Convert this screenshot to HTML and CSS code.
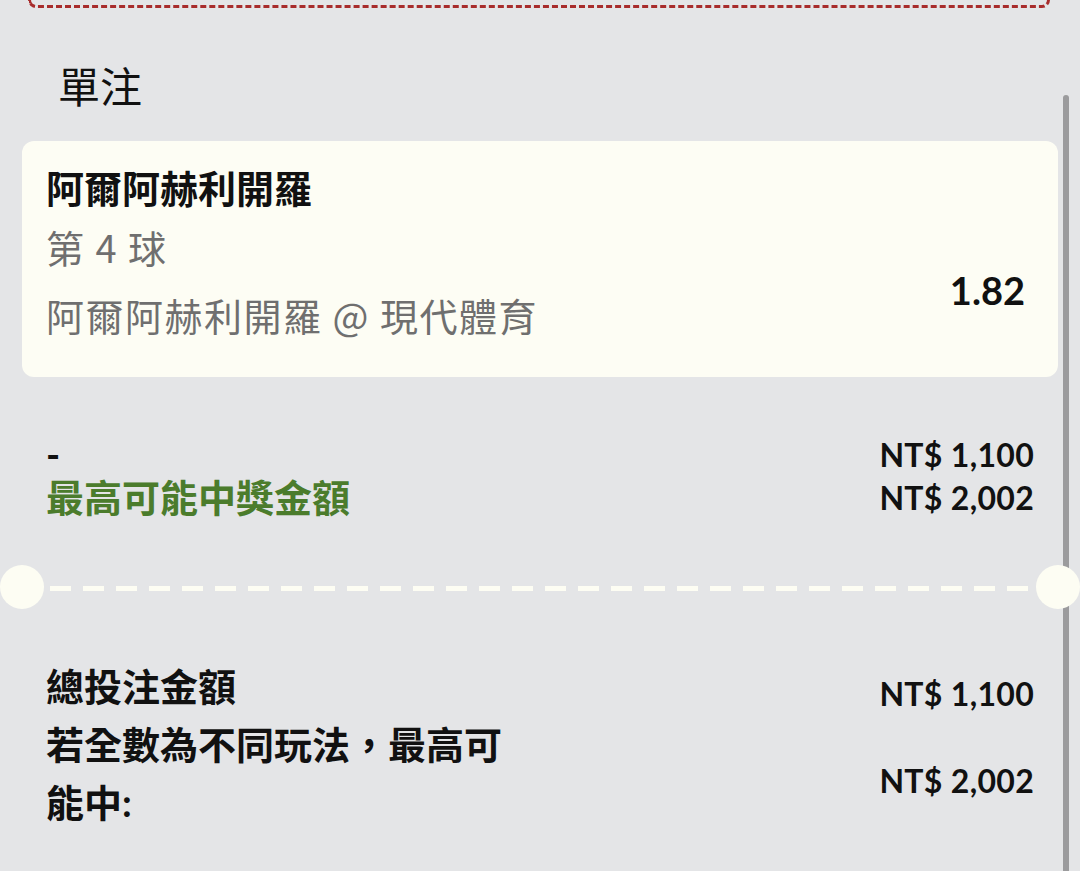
FILE: index.html
```html
<!DOCTYPE html>
<html lang="zh-Hant">
<head>
    <meta charset="UTF-8">
    <meta name="viewport" content="width=device-width, initial-scale=1.0">
    <title>投注單</title>
    <link rel="stylesheet" href="styles.css">
</head>
<body>

    <div class="prev-slip"></div>
    <div class="scroll-thumb"></div>

    <main class="betslip">
        <h2 class="section-title">單注</h2>

        <div class="bet-card">
            <div class="bet-info">
                <div class="bet-team">阿爾阿赫利開羅</div>
                <div class="bet-market">第 4 球</div>
                <div class="bet-event">阿爾阿赫利開羅 @ 現代體育</div>
            </div>
            <div class="bet-odds">1.82</div>
        </div>

        <div class="stake-row">
            <div class="stake-labels">
                <div>-</div>
                <div class="win-label">最高可能中獎金額</div>
            </div>
            <div class="stake-values">
                <div>NT$ 1,100</div>
                <div>NT$ 2,002</div>
            </div>
        </div>

        <div class="divider">
            <span class="notch"></span>
            <span class="dashes"></span>
            <span class="notch"></span>
        </div>

        <div class="summary">
            <div class="summary-row">
                <span class="summary-label">總投注金額</span>
                <span class="amount">NT$ 1,100</span>
            </div>
            <div class="summary-row">
                <span class="summary-label">若全數為不同玩法，最高可能中:</span>
                <span class="amount">NT$ 2,002</span>
            </div>
        </div>
    </main>

</body>
</html>
```

FILE: styles.css
```css
body {
    margin: 0;
    background: #e4e5e7;
    font-family: Lato, "Noto Sans CJK TC", sans-serif;
    color: #111;
    overflow: hidden;
    position: relative;
    height: 871px;
}

/* bottom edge of the slip above */
.prev-slip {
    height: 5px;
    margin: 0 30px 0 28px;
    border: 3px dashed #a82c2c;
    border-top: none;
    border-radius: 0 0 10px 10px;
}

.scroll-thumb {
    position: absolute;
    top: 95px;
    left: 1063px;
    width: 6px;
    height: 800px;
    border-radius: 3px;
    background: #9b9b9d;
    z-index: 2;
}

.section-title {
    margin: 54px 0 0 58px;
    font-size: 42px;
    font-weight: 400;
    line-height: 50px;
}

.bet-card {
    margin: 29px 22px 0;
    padding: 16px 33px 32px 24px;
    background: #fdfdf4;
    border-radius: 12px;
    display: flex;
    justify-content: space-between;
    align-items: center;
}

.bet-info {
    font-family: "Noto Sans CJK TC", sans-serif;
    font-size: 38px;
    line-height: 60px;
}

.bet-team {
    font-weight: 700;
}

.bet-market, .bet-event {
    letter-spacing: 1.5px;
    color: #6f6f6f;
}

.bet-event {
    margin-top: 8px;
}

.bet-odds {
    padding-top: 78px;
    font-size: 38px;
    font-weight: 700;
}

.stake-row {
    margin-top: 56px;
    padding: 0 46px;
    display: flex;
    justify-content: space-between;
    font-weight: 700;
    line-height: 43px;
}

.stake-labels {
    font-size: 38px;
}

.stake-values {
    font-size: 32px;
    letter-spacing: 0.3px;
    text-align: right;
}

.win-label {
    color: #4b7c2c;
}

.divider {
    margin-top: 46px;
    display: flex;
    align-items: center;
    height: 44px;
}

.notch {
    width: 44px;
    height: 44px;
    border-radius: 50%;
    background: #fdfdf3;
    flex-shrink: 0;
    z-index: 3;
}

.dashes {
    flex: 1;
    height: 5px;
    margin: 3px 6px 0;
    background: repeating-linear-gradient(to right, #fdfdf3 0 21px, transparent 21px 33px);
}

.summary {
    margin-top: 48px;
    padding: 0 46px;
    font-weight: 700;
}

.summary-row {
    display: flex;
    justify-content: space-between;
    align-items: center;
}

.summary-label {
    width: 480px;
    font-size: 38px;
    line-height: 58px;
}

.amount {
    padding-top: 14px;
    font-size: 32px;
    letter-spacing: 0.3px;
}
```
